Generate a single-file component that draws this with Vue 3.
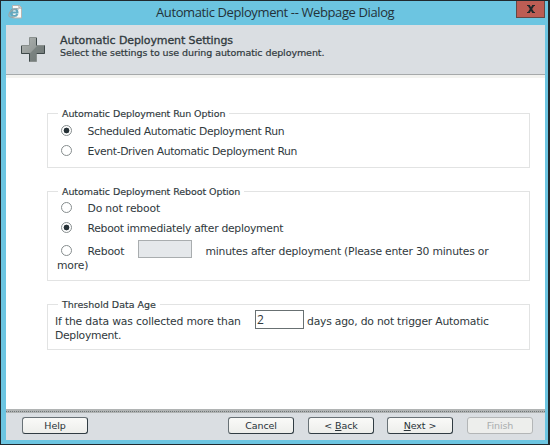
<script setup>
import { ref } from 'vue'

const runOption = ref('scheduled')
const rebootOption = ref('immediate')
const rebootMinutes = ref('')
const dataAge = ref('2')
</script>

<template>
  <div class="dialog">
    <div class="titlebar">
      <svg class="page-icon" width="15" height="15" viewBox="0 0 15 15">
        <path d="M4.500.5h7l2 2V13h-9z" fill="#fbfbf8" stroke="#b4b5b3" />
        <path d="M11 .5V3h3" fill="none" stroke="#9ea1a0" />
        <path d="M3 7.500h6.500C9.500 3 3 3 3 7.500c0 4 5 4.500 6.500 1.500" fill="none" stroke="#62a9c0" stroke-width="2" />
        <path d="M1 11C0 6.500 6 2.500 11 4M1 11c1.500 2 4.500 1.500 6 .5" fill="none" stroke="#9ba6a6" stroke-width="1.200" />
      </svg>
      <span class="title">Automatic Deployment -- Webpage Dialog</span>
      <button class="close" aria-label="Close">
        <svg width="8" height="8" viewBox="0 0 8 8">
          <path d="M0 .5h3M5 .5h3M0 7.500h3M5 7.500h3" stroke="#20272a" stroke-width="1" />
          <path d="M1.800.5 6.200 7.500M6.200.5 1.800 7.500" stroke="#20272a" stroke-width="2" />
        </svg>
      </button>
    </div>

    <div class="body">
      <header class="header">
        <svg class="plus" width="24" height="25" viewBox="0 0 24 25">
          <defs>
            <linearGradient id="metal" x1="0" y1="0" x2="1" y2="1">
              <stop offset=".2" stop-color="#a5aaa8" />
              <stop offset=".5" stop-color="#969c9a" />
              <stop offset=".53" stop-color="#7b8381" />
              <stop offset="1" stop-color="#707876" />
            </linearGradient>
          </defs>
          <path d="M8.500.5h7v8h8v8h-8v8h-7v-8h-8v-8h8z" fill="url(#metal)" stroke="#8a908e" />
          <path d="M15.500 1v7.500M23.500 8.500v8h-8M.5 9v7.500h8v8" fill="none" stroke="#3e4849" />
        </svg>
        <div class="heading">
          <h1>Automatic Deployment Settings</h1>
          <p>Select the settings to use during automatic deployment.</p>
        </div>
      </header>

      <main class="content">
        <section class="group run">
          <h2 class="l-run">Automatic Deployment Run Option</h2>
          <label class="row">
            <input v-model="runOption" type="radio" value="scheduled" />
            <span class="t-sched">Scheduled Automatic Deployment Run</span>
          </label>
          <label class="row">
            <input v-model="runOption" type="radio" value="event" />
            <span class="t-event">Event-Driven Automatic Deployment Run</span>
          </label>
        </section>

        <section class="group reboot">
          <h2 class="l-reboot">Automatic Deployment Reboot Option</h2>
          <label class="row">
            <input v-model="rebootOption" type="radio" value="none" />
            <span class="t-none">Do not reboot</span>
          </label>
          <label class="row">
            <input v-model="rebootOption" type="radio" value="immediate" />
            <span class="t-imm">Reboot immediately after deployment</span>
          </label>
          <div class="row tall">
            <input v-model="rebootOption" type="radio" value="delayed" />
            <span class="t-reb">Reboot</span>
            <input v-model="rebootMinutes" class="minutes" type="text" disabled />
            <span class="t-min">minutes after deployment (Please enter 30 minutes or</span>
          </div>
          <div class="wrap more">more)</div>
        </section>

        <section class="group age">
          <h2 class="l-age">Threshold Data Age</h2>
          <div class="age-row">
            <span class="t-if">If the data was collected more than</span>
            <input v-model="dataAge" class="days" type="text" />
            <span class="t-days">days ago, do not trigger Automatic</span>
          </div>
          <div class="wrap dep">Deployment.</div>
        </section>
      </main>

      <footer class="footer">
        <button>Help</button>
        <button class="cancel">Cancel</button>
        <button class="back">&lt; <u>B</u>ack</button>
        <button class="next"><u>N</u>ext &gt;</button>
        <button class="finish" disabled>Finish</button>
      </footer>
    </div>
  </div>
</template>

<style>
html,
body {
  overflow: hidden;
}
</style>

<style scoped>
* {
  box-sizing: border-box;
}
.dialog {
  width: 550px;
  height: 445px;
  border: 1px solid #20292e;
  border-right-width: 2px;
  background: #6cc5e1;
  padding: 0 3px 4px 5px;
  font-family: "DejaVu Sans", sans-serif;
  color: #30393d;
  white-space: nowrap;
}
.titlebar {
  height: 24px;
  display: flex;
  align-items: flex-start;
}
.page-icon {
  margin: 4px 0 0 2px;
}
.title {
  margin-left: 133px;
  width: 240px;
  font: 13px/23px "Open Sans", sans-serif;
  letter-spacing: -0.39px;
  color: #233239;
}
.close {
  margin-left: auto;
  width: 29px;
  height: 17px;
  padding: 0 0 1px 1px;
  border: 1px solid #654744;
  border-top: 0;
  background: #bd5d54;
  display: flex;
  align-items: center;
  justify-content: center;
}
.body {
  width: 539px;
  height: 415px;
  background: #fff;
  display: flex;
  flex-direction: column;
}
.header {
  height: 50px;
  flex: none;
  background: #dadee2;
  border-bottom: 1px solid #a6a9aa;
  display: flex;
  padding-left: 15px;
}
.plus {
  margin-top: 12px;
}
.heading {
  margin: 9px 0 0 15px;
}
h1,
h2,
p {
  margin: 0;
  font-weight: 400;
}
h1 {
  font-size: 11px;
  line-height: 13px;
  letter-spacing: -0.1px;
  -webkit-text-stroke: 0.3px;
}
.heading p {
  font-size: 9.5px;
  line-height: 12px;
  letter-spacing: -0.08px;
  -webkit-text-stroke: 0.2px;
}
.content {
  flex: 1;
  padding: 38px 15px 0 41px;
  border-top: 3px solid #f3f3f0;
}
.group {
  border: 1px solid #e2e3e3;
  padding-left: 9px;
  font-size: 10.8px;
}
.run {
  height: 55px;
  margin-top: -3px;
}
.reboot {
  height: 90px;
  margin-top: 23px;
}
.age {
  height: 46px;
  margin-top: 23px;
}
.group h2 {
  width: max-content;
  height: 12px;
  margin: -6px 0 0 1px;
  padding: 0 4px;
  background: #fff;
  font-size: 9.5px;
  line-height: 12px;
  letter-spacing: -0.08px;
  -webkit-text-stroke: 0.15px;
}
.group .l-age {
  letter-spacing: 0;
}
.row {
  height: 20px;
  display: flex;
  align-items: center;
  line-height: 14px;
}
.row span {
  padding-top: 2px;
}
.run h2 {
  margin-bottom: 1px;
}
input[type="radio"] {
  appearance: none;
  flex: none;
  width: 11px;
  height: 11px;
  margin: 0 15.5px 2px 4px;
  border: 1px solid #868d8e;
  border-radius: 50%;
  background: #fff;
}
input[type="radio"]:checked {
  background: radial-gradient(circle, #263136 2.6px, #fff 3.2px);
}
.tall {
  height: 24px;
}
.tall input[type="radio"] {
  margin-bottom: 0;
}
.t-sched,
.t-event {
  letter-spacing: -0.36px;
}
.t-none {
  letter-spacing: -0.16px;
}
.t-imm {
  letter-spacing: -0.29px;
}
.t-min {
  letter-spacing: -0.22px;
}
.minutes,
.days {
  border-radius: 0;
  outline: 0;
  padding: 0 1px;
  font: 12px/14px "Open Sans", sans-serif;
  color: #30393d;
}
.minutes {
  width: 54px;
  height: 18px;
  margin: 0 13.5px 3px 13.5px;
  border: 1px solid #a9adaf;
  background: #e5e8eb;
}
.row .t-reb,
.row .t-min {
  padding-top: 4px;
}
.t-reb {
  width: 37px;
  letter-spacing: -0.2px;
}
.wrap {
  line-height: 14px;
}
.more {
  margin-top: -3px;
  letter-spacing: -0.2px;
}
.age {
  padding-left: 7px;
}
.age h2 {
  margin-left: 3px;
}
.age-row {
  height: 20px;
  display: flex;
  align-items: center;
}
.t-if {
  width: 187px;
  letter-spacing: -0.18px;
}
.days {
  width: 49px;
  height: 19px;
  margin: 0 3px 3px 13px;
  border: 1px solid #687072;
  background: #fff;
}
.t-days {
  letter-spacing: -0.22px;
}
.dep {
  margin-top: -2px;
  letter-spacing: -0.3px;
}
.footer {
  height: 31px;
  flex: none;
  display: flex;
  align-items: flex-start;
  background: #dadee2;
  border-top: 4px solid #b1b4b4;
  padding: 4px 0 0 16px;
  position: relative;
}
.footer::before {
  content: "";
  position: absolute;
  top: -2px;
  left: 0;
  right: 0;
  border-top: 1px dotted #707778;
}
.footer button {
  width: 66px;
  height: 17px;
  padding: 1px 0 0;
  border: 1px solid #303c43;
  border-top-color: #687176;
  border-left-color: #687176;
  border-radius: 3px;
  background: linear-gradient(#fafaf8, #edeeeb);
  font: 9.5px/14px "DejaVu Sans", sans-serif;
  letter-spacing: -0.1px;
  color: #273137;
}
.footer .cancel {
  margin-left: 140px;
}
.footer .back {
  margin-left: 14px;
}
.footer .next {
  margin-left: 13px;
}
.footer .finish {
  margin-left: 14px;
  border-color: #b3b6b7;
  background: #edeeec;
  color: #a9adae;
}
</style>
